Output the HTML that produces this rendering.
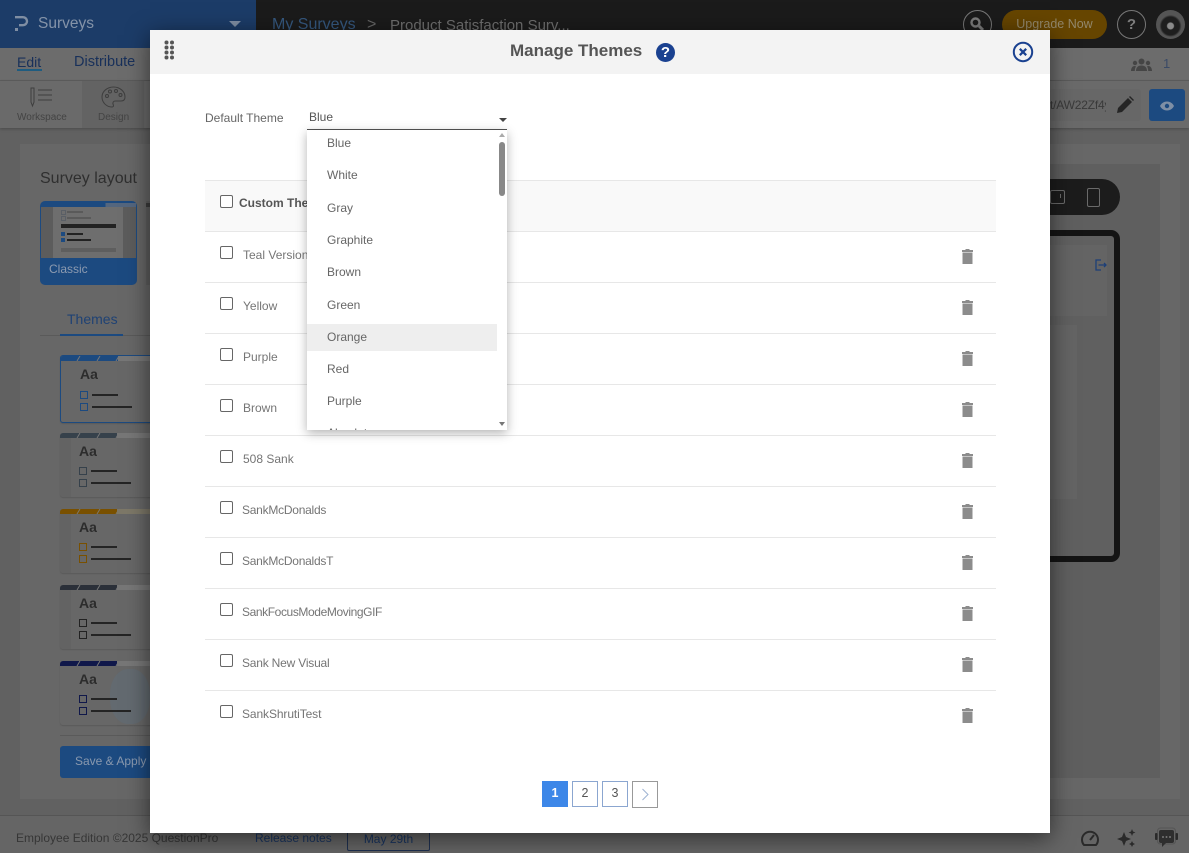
<!DOCTYPE html>
<html lang="en"><head><meta charset="utf-8"><title>Manage Themes</title>
<style>
html,body{margin:0;padding:0}
body{width:1189px;height:853px;position:relative;overflow:hidden;background:#616161;font-family:"Liberation Sans",sans-serif;font-size:12px;color:#555}
.a,.t{position:absolute}
.t{white-space:nowrap;line-height:16px}
.card{position:absolute;left:60px;width:120px;background:#676767;border-radius:3px;box-shadow:0 1px 1px #5a5a5a;overflow:hidden}
.strip{position:absolute;left:0;top:0;width:120px;height:5px}
.side{position:absolute;left:0;top:5px;width:11px;bottom:0;background:#636363}
.aa{position:absolute;left:19px;top:9px;font-weight:bold;font-size:14px;color:#2c2c2c;line-height:18px}
.cb{position:absolute;left:19px;width:6px;height:6px;border:1px solid #222}
.ln{position:absolute;left:31px;height:2px;background:#242424}
.modal{position:absolute;left:150px;top:30px;width:900px;height:803px;background:#fff;box-shadow:0 5px 22px rgba(0,0,0,.55)}
.line{position:absolute;left:205px;width:791px;height:1px;background:#e7e7e7}
.ck{position:absolute;left:220px;width:11px;height:11px;border:1px solid #666;border-radius:2px;background:#fff}
.nm{position:absolute;white-space:nowrap;line-height:16px;color:#757575;font-size:12px}
.tr{position:absolute;left:961px;width:13px;height:15px}
.opt{position:absolute;line-height:16px;color:#666;font-size:12px;white-space:nowrap}
.pg{position:absolute;top:781px;width:24px;height:24px;border:1px solid #8ba6d0;text-align:center;line-height:23px;color:#555;font-size:12.5px;background:#fff}
</style></head><body>

<!-- top header -->
<div class="a" style="left:0;top:0;width:256px;height:48px;background:#1c3c68"></div>
<div class="a" style="left:256px;top:0;width:933px;height:48px;background:#1b1b1b"></div>
<svg class="a" style="left:14px;top:15px" width="15" height="17" viewBox="0 0 15 17"><path d="M1 2.200h8a4 4 0 0 1 0 8H5" fill="none" stroke="#7f8ea3" stroke-width="2.400"/><rect x="1" y="13" width="3" height="3" fill="#7f8ea3"/></svg>
<div class="t" style="left:38px;top:14px;font-size:15.500px;line-height:20px;color:#8493a8">Surveys</div>
<div class="a" style="left:229px;top:21px;width:0;height:0;border-left:6px solid transparent;border-right:6px solid transparent;border-top:6px solid #7f8ea3"></div>
<div class="t" style="left:272px;top:15px;font-size:16px;line-height:20px;color:#35587f">My Surveys</div>
<div class="t" style="left:367px;top:15px;font-size:16px;line-height:20px;color:#666">&gt;</div>
<div class="t" style="left:390px;top:16px;font-size:15px;line-height:20px;color:#6f6f6f">Product Satisfaction Surv...</div>
<div class="a" style="left:963px;top:10px;width:27px;height:27px;border:1px solid #777;border-radius:50%"></div>
<svg class="a" style="left:969px;top:16px" width="16" height="16" viewBox="0 0 16 16"><circle cx="6.500" cy="6.500" r="4" fill="none" stroke="#7b7b7b" stroke-width="2.400"/><path d="M10 10l4 4" stroke="#7b7b7b" stroke-width="3"/></svg>
<div class="a" style="left:1002px;top:10px;width:105px;height:29px;border-radius:15px;background:#664500;text-align:center;line-height:28px;color:#92876b;font-size:12.500px">Upgrade Now</div>
<div class="a" style="left:1117px;top:10px;width:27px;height:27px;border:1px solid #777;border-radius:50%;text-align:center;line-height:27px;color:#7d7d7d;font-weight:bold;font-size:15px">?</div>
<div class="a" style="left:1156px;top:10px;width:29px;height:29px;border-radius:50%;background:radial-gradient(circle at 50% 55%,#8a8a8a 0 3px,#1e1e1e 4px 9px,#555 11px)"></div>

<!-- subnav -->
<div class="a" style="left:0;top:48px;width:1189px;height:32px;background:#6c6c6c"></div>
<div class="a" style="left:0;top:80px;width:1189px;height:1px;background:#5e5e5e"></div>
<div class="t" style="left:17px;top:54px;font-size:14px;color:#18305a">Edit</div>
<div class="a" style="left:17px;top:69px;width:25px;height:2px;background:#1e5c80"></div>
<div class="t" style="left:74px;top:54px;font-size:14.500px;color:#18305a">Distribute</div>
<svg class="a" style="left:1131px;top:58px" width="21" height="13" viewBox="0 0 21 13" fill="#454545"><circle cx="10.500" cy="3.500" r="3"/><circle cx="4" cy="5" r="2.200"/><circle cx="17" cy="5" r="2.200"/><path d="M5 13c0-4 2.500-5.500 5.500-5.500S16 9 16 13zM0 13c0-3 1.500-5 3.500-5 1 0 1.500.5 1.500.5C4 10 3.800 11.500 3.800 13zM21 13c0-3-1.500-5-3.500-5-1 0-1.500.5-1.500.5 1 1.500 1.200 3 1.200 4.500z"/></svg>
<div class="t" style="left:1163px;top:56px;color:#3a4a66;font-size:13px">1</div>

<!-- toolbar -->
<div class="a" style="left:0;top:81px;width:1189px;height:47px;background:#6a6a6a;box-shadow:0 1px 3px rgba(0,0,0,.25)"></div>
<div class="a" style="left:82px;top:81px;width:62px;height:47px;background:#636363"></div>
<svg class="a" style="left:29px;top:87px" width="25" height="21" viewBox="0 0 25 21" fill="none" stroke="#3e3e3e"><path d="M2 1h3v14l-1.500 4L2 15z"/><path d="M9 3h14M9 8h14M9 13h14" stroke-width="1"/></svg>
<div class="t" style="left:17px;top:110px;font-size:10px;color:#444">Workspace</div>
<svg class="a" style="left:101px;top:86px" width="25" height="24" viewBox="0 0 25 24" fill="none" stroke="#3e3e3e"><path d="M12.500 1C6 1 1 5.500 1 11s4.500 10 10 10c2 0 1.500-2 1-3-.5-1.500.5-3 2.500-3H20c2.500 0 4-1.500 4-4C24 5.500 19 1 12.500 1z"/><circle cx="6" cy="10" r="1.500"/><circle cx="9" cy="5.500" r="1.500"/><circle cx="15" cy="5" r="1.500"/><circle cx="19.500" cy="9" r="1.500"/></svg>
<div class="t" style="left:98px;top:110px;font-size:10px;color:#444">Design</div>
<div class="a" style="left:1050px;top:89px;width:91px;height:32px;background:#676767;border-radius:3px"></div>
<div class="t" style="left:1050px;top:97px;width:56px;overflow:hidden;font-size:12px;letter-spacing:-.2px;color:#3a3a3a">t/AW22Zf4y</div>
<svg class="a" style="left:1116px;top:96px" width="18" height="18" viewBox="0 0 18 18" fill="#252525"><path d="M1 17l1-5L12 2l4 4L6 16zM13 1l1-1 4 4-1 1z"/></svg>
<div class="a" style="left:1149px;top:89px;width:36px;height:32px;background:#1c4a80;border-radius:3px"></div>
<svg class="a" style="left:1160px;top:101px" width="14" height="10" viewBox="0 0 14 10"><path d="M0 5c3-6 11-6 14 0-3 6-11 6-14 0z" fill="#7e8fa5"/><circle cx="7" cy="5" r="2.200" fill="#1c4a80"/></svg>

<!-- main -->
<div class="a" style="left:20px;top:144px;width:1160px;height:655px;background:#676767"></div>
<div class="a" style="left:1000px;top:164px;width:160px;height:614px;background:#5f5f5f"></div>
<div class="t" style="left:40px;top:169px;font-size:16px;line-height:20px;color:#2f2f2f">Survey layout</div>

<div class="a" style="left:40px;top:201px;width:97px;height:84px;background:#1c4a80;border-radius:5px;overflow:hidden">
 <div class="a" style="left:1px;top:2px;width:95px;height:55px;background:#5c5c5c"></div>
 <div class="a" style="left:13px;top:6px;width:70px;height:51px;background:#6e6e6e"></div>
 <div class="a" style="left:1px;top:2px;width:95px;height:4px;background:linear-gradient(90deg,#1c4a80 0 68%,#54667e 68%)"></div>
 <div class="a" style="left:21px;top:9px;width:3px;height:3px;border:1px solid #5a5f66"></div>
 <div class="a" style="left:27px;top:10px;width:16px;height:2px;background:#5a5a5a"></div>
 <div class="a" style="left:21px;top:15px;width:3px;height:3px;border:1px solid #5a5f66"></div>
 <div class="a" style="left:27px;top:16px;width:24px;height:2px;background:#5a5a5a"></div>
 <div class="a" style="left:21px;top:23px;width:55px;height:4px;background:#222"></div>
 <div class="a" style="left:21px;top:31px;width:4px;height:4px;background:#1c4a80"></div>
 <div class="a" style="left:27px;top:32px;width:16px;height:2px;background:#222"></div>
 <div class="a" style="left:21px;top:37px;width:4px;height:4px;background:#1c4a80"></div>
 <div class="a" style="left:27px;top:38px;width:24px;height:2px;background:#222"></div>
 <div class="a" style="left:21px;top:47px;width:55px;height:4px;background:#5e5e5e"></div>
 <div class="t" style="left:9px;top:60px;color:#8d9bb0">Classic</div>
</div>
<div class="a" style="left:146px;top:201px;width:4px;height:84px;background:#5f5f5f"></div>
<div class="a" style="left:146px;top:203px;width:4px;height:4px;background:#3c3c3c"></div>

<div class="t" style="left:67px;top:311px;font-size:14px;color:#1f4274">Themes</div>
<div class="a" style="left:40px;top:335px;width:110px;height:1px;background:#5a5a5a"></div>
<div class="a" style="left:60px;top:334px;width:63px;height:2px;background:#1c4a80"></div>

<div class="card" style="top:355px;height:68px;border:1px solid #1c4a80;box-sizing:border-box">
 <div class="strip" style="background:linear-gradient(90deg,#1c4a80 0 57px,#777 57px)"></div>
 <svg class="a" style="left:0;top:0" width="120" height="5"><path d="M16 5l3-5M36 5l3-5M55 5l3-5" stroke="#777"/></svg>
 <div class="aa">Aa</div><div class="cb" style="top:35px;border-color:#1c4a80"></div><div class="ln" style="top:38px;width:26px"></div><div class="cb" style="top:47px;border-color:#1c4a80"></div><div class="ln" style="top:50px;width:40px"></div></div>
<div class="card" style="top:433px;height:64px">
 <div class="strip" style="background:linear-gradient(90deg,#36414b 0 57px,#777 57px)"></div>
 <svg class="a" style="left:0;top:0" width="120" height="5"><path d="M17 5l3-5M37 5l3-5M56 5l3-5" stroke="#777"/></svg>
 <div class="side"></div><div class="aa">Aa</div><div class="cb" style="top:34px;border-color:#36414b"></div><div class="ln" style="top:37px;width:26px"></div><div class="cb" style="top:46px;border-color:#36414b"></div><div class="ln" style="top:49px;width:40px"></div></div>
<div class="card" style="top:509px;height:64px">
 <div class="strip" style="background:linear-gradient(90deg,#795000 0 57px,#7d7868 57px)"></div>
 <svg class="a" style="left:0;top:0" width="120" height="5"><path d="M17 5l3-5M37 5l3-5M56 5l3-5" stroke="#7d7868"/></svg>
 <div class="side"></div><div class="aa">Aa</div><div class="cb" style="top:34px;border-color:#795000"></div><div class="ln" style="top:37px;width:26px"></div><div class="cb" style="top:46px;border-color:#795000"></div><div class="ln" style="top:49px;width:40px"></div></div>
<div class="card" style="top:585px;height:64px">
 <div class="strip" style="background:linear-gradient(90deg,#2b3039 0 57px,#777 57px)"></div>
 <svg class="a" style="left:0;top:0" width="120" height="5"><path d="M17 5l3-5M37 5l3-5M56 5l3-5" stroke="#777"/></svg>
 <div class="side"></div><div class="aa">Aa</div><div class="cb" style="top:34px"></div><div class="ln" style="top:37px;width:26px"></div><div class="cb" style="top:46px"></div><div class="ln" style="top:49px;width:40px"></div></div>
<div class="card" style="top:661px;height:64px">
 <div class="strip" style="background:linear-gradient(90deg,#10184a 0 57px,#777 57px)"></div>
 <svg class="a" style="left:0;top:0" width="120" height="5"><path d="M17 5l3-5M37 5l3-5M56 5l3-5" stroke="#777"/></svg>
 <div class="a" style="left:50px;top:8px;width:40px;height:55px;background:#636a70;border-radius:45%"></div><div class="aa">Aa</div><div class="cb" style="top:34px;border-color:#10184a"></div><div class="ln" style="top:37px;width:26px"></div><div class="cb" style="top:46px;border-color:#10184a"></div><div class="ln" style="top:49px;width:40px"></div></div>
<div class="a" style="left:60px;top:735px;width:90px;height:1px;background:#5a5a5a"></div>
<div class="a" style="left:60px;top:746px;width:100px;height:32px;background:#1c4a80;border-radius:3px;line-height:31px;padding-left:15px;box-sizing:border-box;color:#8a99ae;font-size:12px">Save &amp; Apply</div>

<!-- right preview -->
<div class="a" style="left:1030px;top:179px;width:90px;height:36px;background:#1c1c1c;border-radius:18px"></div>
<div class="a" style="left:1050px;top:190px;width:13px;height:12px;border:1px solid #6a6a6a;border-radius:2px"></div>
<div class="a" style="left:1060px;top:194px;width:1px;height:4px;background:#6a6a6a"></div>
<div class="a" style="left:1087px;top:188px;width:11px;height:17px;border:1px solid #6a6a6a;border-radius:2px"></div>
<div class="a" style="left:1000px;top:230px;width:108px;height:320px;border:6px solid #141414;border-radius:9px;background:#606060"></div>
<div class="a" style="left:1006px;top:245px;width:101px;height:71px;background:#646464"></div>
<div class="a" style="left:1006px;top:325px;width:71px;height:174px;background:#646464"></div>
<svg class="a" style="left:1095px;top:259px" width="12" height="12" viewBox="0 0 12 12" fill="none" stroke="#1c3f78" stroke-width="1.300"><path d="M6 1H1v10h5M3.500 6H11M9 4l2 2-2 2"/></svg>

<!-- footer -->
<div class="a" style="left:0;top:815px;width:1189px;height:1px;background:#555"></div>
<div class="a" style="left:0;top:816px;width:1189px;height:37px;background:#656565"></div>
<div class="t" style="left:16px;top:830px;color:#363636;font-size:12px">Employee Edition ©2025 QuestionPro</div>
<div class="t" style="left:255px;top:830px;color:#1a3560;font-size:12px">Release notes</div>
<div class="a" style="left:347px;top:825px;width:81px;height:24px;border:1px solid #1f3050;border-radius:2px;text-align:center;line-height:27px;color:#1a3560;font-size:12px">May 29th</div>
<svg class="a" style="left:1080px;top:829px" width="20" height="18" viewBox="0 0 20 18" fill="none" stroke="#2a2a2a" stroke-width="2"><path d="M4 16a8 8 0 1 1 12 0z"/><path d="M10 11l4-5"/></svg>
<svg class="a" style="left:1117px;top:828px" width="19" height="20" viewBox="0 0 19 20" fill="#2a2a2a"><path d="M7 4l2 5 5 2-5 2-2 5-2-5-5-2 5-2zM15 1l1 2.500 2.500 1-2.500 1-1 2.500-1-2.500-2.500-1 2.500-1zM15 13l1 2 2 1-2 1-1 2-1-2-2-1 2-1z"/></svg>
<svg class="a" style="left:1154px;top:827px" width="25" height="22" viewBox="0 0 25 22"><rect x="5" y="3" width="15" height="13" rx="2" fill="#2e2e2e"/><rect x="3.500" y="1" width="18" height="16" rx="3" fill="none" stroke="#555"/><path d="M8 16v4l4-4z" fill="#2e2e2e"/><rect x="1" y="6" width="2.500" height="7" rx="1" fill="#2a2a2a"/><rect x="21.500" y="6" width="2.500" height="7" rx="1" fill="#2a2a2a"/><circle cx="9" cy="10" r="1" fill="#777"/><circle cx="12.500" cy="10" r="1" fill="#777"/><circle cx="16" cy="10" r="1" fill="#777"/></svg>

<!-- modal -->
<div class="modal"></div>
<div class="a" style="left:150px;top:30px;width:900px;height:44px;background:#f3f3f3"></div>
<svg class="a" style="left:164px;top:40px" width="11" height="20" viewBox="0 0 11 20" fill="#555"><circle cx="2.500" cy="2.500" r="2"/><circle cx="8" cy="2.500" r="2"/><circle cx="2.500" cy="7.500" r="2"/><circle cx="8" cy="7.500" r="2"/><circle cx="2.500" cy="12.500" r="2"/><circle cx="8" cy="12.500" r="2"/><circle cx="2.500" cy="17.500" r="2"/><circle cx="8" cy="17.500" r="2"/></svg>
<div class="t" style="left:510px;top:41px;font-size:17px;line-height:20px;font-weight:bold;color:#555">Manage Themes</div>
<div class="a" style="left:656px;top:43px;width:19px;height:19px;border-radius:50%;background:#1a4190;color:#fff;text-align:center;line-height:19px;font-weight:bold;font-size:15px">?</div>
<svg class="a" style="left:1012px;top:41px" width="22" height="22" viewBox="0 0 22 22" fill="none" stroke="#1a4190"><circle cx="11" cy="11" r="9.200" stroke-width="2"/><path d="M7.800 7.800l6.400 6.400M14.200 7.800l-6.400 6.400" stroke-width="2.200"/></svg>

<div class="t" style="left:205px;top:110px;color:#666">Default Theme</div>
<div class="t" style="left:309px;top:109px;color:#555">Blue</div>
<div class="a" style="left:499px;top:118px;width:0;height:0;border-left:4px solid transparent;border-right:4px solid transparent;border-top:4px solid #444"></div>
<div class="a" style="left:307px;top:129px;width:200px;height:1px;background:#555"></div>

<div class="a" style="left:205px;top:181px;width:791px;height:50px;background:#f9f9f9"></div>
<div class="line" style="top:180px"></div><div class="line" style="top:231px"></div><div class="line" style="top:282px"></div><div class="line" style="top:333px"></div><div class="line" style="top:384px"></div><div class="line" style="top:435px"></div><div class="line" style="top:486px"></div><div class="line" style="top:537px"></div><div class="line" style="top:588px"></div><div class="line" style="top:639px"></div><div class="line" style="top:690px"></div>

<div class="ck" style="top:195px"></div><div class="t" style="left:239px;top:195px;font-weight:bold;color:#555">Custom Themes</div>
<div class="ck" style="top:246px"></div><div class="nm" style="left:243px;top:247px">Teal Version</div>
<div class="ck" style="top:297px"></div><div class="nm" style="left:243px;top:298px">Yellow</div>
<div class="ck" style="top:348px"></div><div class="nm" style="left:243px;top:349px">Purple</div>
<div class="ck" style="top:399px"></div><div class="nm" style="left:243px;top:400px">Brown</div>
<div class="ck" style="top:450px"></div><div class="nm" style="left:243px;top:451px">508 Sank</div>
<div class="ck" style="top:501px"></div><div class="nm" style="left:242px;top:502px;letter-spacing:-.25px">SankMcDonalds</div>
<div class="ck" style="top:552px"></div><div class="nm" style="left:242px;top:553px;letter-spacing:-.25px">SankMcDonaldsT</div>
<div class="ck" style="top:603px"></div><div class="nm" style="left:242px;top:604px;letter-spacing:-.4px">SankFocusModeMovingGIF</div>
<div class="ck" style="top:654px"></div><div class="nm" style="left:242px;top:655px;letter-spacing:-.2px">Sank New Visual</div>
<div class="ck" style="top:705px"></div><div class="nm" style="left:242px;top:706px;letter-spacing:-.1px">SankShrutiTest</div>

<svg class="tr" style="top:249px" viewBox="0 0 13 15"><path d="M4.500 0h4v1h3.500v2H1V1h3.500zM1.500 3.500h10V15h-10z" fill="#8c8c8c"/></svg>
<svg class="tr" style="top:300px" viewBox="0 0 13 15"><path d="M4.500 0h4v1h3.500v2H1V1h3.500zM1.500 3.500h10V15h-10z" fill="#8c8c8c"/></svg>
<svg class="tr" style="top:351px" viewBox="0 0 13 15"><path d="M4.500 0h4v1h3.500v2H1V1h3.500zM1.500 3.500h10V15h-10z" fill="#8c8c8c"/></svg>
<svg class="tr" style="top:402px" viewBox="0 0 13 15"><path d="M4.500 0h4v1h3.500v2H1V1h3.500zM1.500 3.500h10V15h-10z" fill="#8c8c8c"/></svg>
<svg class="tr" style="top:453px" viewBox="0 0 13 15"><path d="M4.500 0h4v1h3.500v2H1V1h3.500zM1.500 3.500h10V15h-10z" fill="#8c8c8c"/></svg>
<svg class="tr" style="top:504px" viewBox="0 0 13 15"><path d="M4.500 0h4v1h3.500v2H1V1h3.500zM1.500 3.500h10V15h-10z" fill="#8c8c8c"/></svg>
<svg class="tr" style="top:555px" viewBox="0 0 13 15"><path d="M4.500 0h4v1h3.500v2H1V1h3.500zM1.500 3.500h10V15h-10z" fill="#8c8c8c"/></svg>
<svg class="tr" style="top:606px" viewBox="0 0 13 15"><path d="M4.500 0h4v1h3.500v2H1V1h3.500zM1.500 3.500h10V15h-10z" fill="#8c8c8c"/></svg>
<svg class="tr" style="top:657px" viewBox="0 0 13 15"><path d="M4.500 0h4v1h3.500v2H1V1h3.500zM1.500 3.500h10V15h-10z" fill="#8c8c8c"/></svg>
<svg class="tr" style="top:708px" viewBox="0 0 13 15"><path d="M4.500 0h4v1h3.500v2H1V1h3.500zM1.500 3.500h10V15h-10z" fill="#8c8c8c"/></svg>

<!-- dropdown -->
<div class="a" style="left:307px;top:130px;width:200px;height:300px;background:#fff;box-shadow:0 3px 10px rgba(0,0,0,.3);overflow:hidden">
 <div class="a" style="left:0;top:194px;width:190px;height:27px;background:#eee"></div>
 <div class="a" style="left:192px;top:12px;width:6px;height:54px;background:#888;border-radius:3px"></div>
 <div class="a" style="left:192px;top:3px;width:0;height:0;border-left:3px solid transparent;border-right:3px solid transparent;border-bottom:4px solid #aaa"></div>
 <div class="a" style="left:192px;top:292px;width:0;height:0;border-left:3px solid transparent;border-right:3px solid transparent;border-top:4px solid #777"></div>
 <div class="opt" style="left:20px;top:5px">Blue</div>
 <div class="opt" style="left:20px;top:37px">White</div>
 <div class="opt" style="left:20px;top:70px">Gray</div>
 <div class="opt" style="left:20px;top:102px">Graphite</div>
 <div class="opt" style="left:20px;top:134px">Brown</div>
 <div class="opt" style="left:20px;top:167px">Green</div>
 <div class="opt" style="left:20px;top:199px">Orange</div>
 <div class="opt" style="left:20px;top:231px">Red</div>
 <div class="opt" style="left:20px;top:263px">Purple</div>
 <div class="opt" style="left:20px;top:295px">Absolute</div>
</div>

<!-- pagination -->
<div class="pg" style="left:542px;background:#3d87e8;border-color:#3d87e8;color:#fff;font-weight:bold">1</div>
<div class="pg" style="left:572px">2</div>
<div class="pg" style="left:602px">3</div>
<div class="pg" style="left:632px;width:24px;height:25px;border-color:#999"></div>
<svg class="a" style="left:641px;top:788px" width="9" height="13" viewBox="0 0 9 13" fill="none" stroke="#9db3d2"><path d="M1.500 1l5.500 5.500L1.500 12"/></svg>

</body></html>
